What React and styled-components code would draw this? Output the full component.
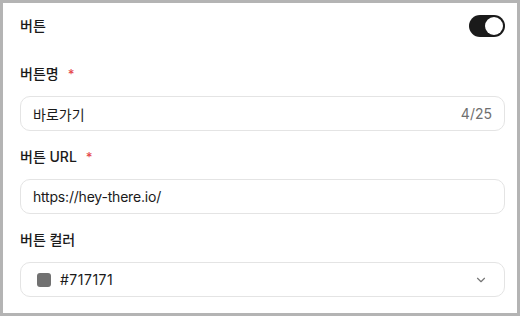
import React from 'react';
import styled, { createGlobalStyle } from 'styled-components';

const GlobalStyle = createGlobalStyle`
  html, body {
    margin: 0;
    padding: 0;
    background: #fff;
  }
  * {
    box-sizing: border-box;
  }
`;

const Frame = styled.div`
  width: 520px;
  height: 316px;
  border: 3px solid #b4b4b4;
  background: #fff;
  padding: 12px 12px 0 17px;
  font-family: Inter, 'Noto Sans CJK KR', sans-serif;
  color: #1a1a1a;
  display: flex;
  flex-direction: column;
`;

const HeaderRow = styled.div`
  display: flex;
  align-items: center;
  justify-content: space-between;
  height: 22px;
  margin-bottom: 27px;
`;

const Field = styled.div`
  display: flex;
  flex-direction: column;
  gap: 12px;
  margin-bottom: 16px;
`;

const Label = styled.div`
  font-size: 14px;
  font-weight: 500;
  line-height: 20px;
  display: flex;
  align-items: center;
`;

const Required = styled.span`
  color: #e5484d;
  font-size: 13px;
  margin-left: 9px;
  line-height: 1;
`;

const Toggle = styled.div`
  width: 36px;
  height: 22px;
  border-radius: 11px;
  background: #1a1a1a;
  display: flex;
  align-items: center;
  justify-content: ${(p) => (p.$on ? 'flex-end' : 'flex-start')};
  padding: 2px;
`;

const Knob = styled.div`
  width: 18px;
  height: 18px;
  border-radius: 50%;
  background: #fff;
`;

const InputBox = styled.div`
  height: 35px;
  border: 1px solid #e4e4e4;
  border-radius: 10px;
  display: flex;
  align-items: center;
  justify-content: space-between;
  padding: 0 12px;
  font-size: 14px;
  gap: 8px;
`;

const Value = styled.span`
  color: #1a1a1a;
  display: flex;
  align-items: center;
  gap: 9px;
  letter-spacing: ${(p) => p.$spacing || '0'};
`;

const Counter = styled.span`
  color: #6f6f6f;
  font-size: 14px;
`;

const Swatch = styled.span`
  width: 14px;
  height: 14px;
  border-radius: 3px;
  background: ${(p) => p.$color};
  margin-left: 4px;
`;

const Chevron = () => (
  <svg width="14" height="14" viewBox="0 0 24 24" fill="none" stroke="#777" strokeWidth="2" strokeLinecap="round" strokeLinejoin="round" style={{ marginRight: 4 }}>
    <path d="M6 9l6 6 6-6" />
  </svg>
);

export default function App() {
  return (
    <>
      <GlobalStyle />
      <Frame>
        <HeaderRow>
          <Label>버튼</Label>
          <Toggle $on>
            <Knob />
          </Toggle>
        </HeaderRow>
        <Field>
          <Label>
            버튼명<Required>*</Required>
          </Label>
          <InputBox>
            <Value>바로가기</Value>
            <Counter>4/25</Counter>
          </InputBox>
        </Field>
        <Field>
          <Label>
            버튼 URL<Required>*</Required>
          </Label>
          <InputBox>
            <Value $spacing="-0.2px">https://hey-there.io/</Value>
          </InputBox>
        </Field>
        <Field>
          <Label>버튼 컬러</Label>
          <InputBox>
            <Value $spacing="0.5px">
              <Swatch $color="#717171" />
              #717171
            </Value>
            <Chevron />
          </InputBox>
        </Field>
      </Frame>
    </>
  );
}
